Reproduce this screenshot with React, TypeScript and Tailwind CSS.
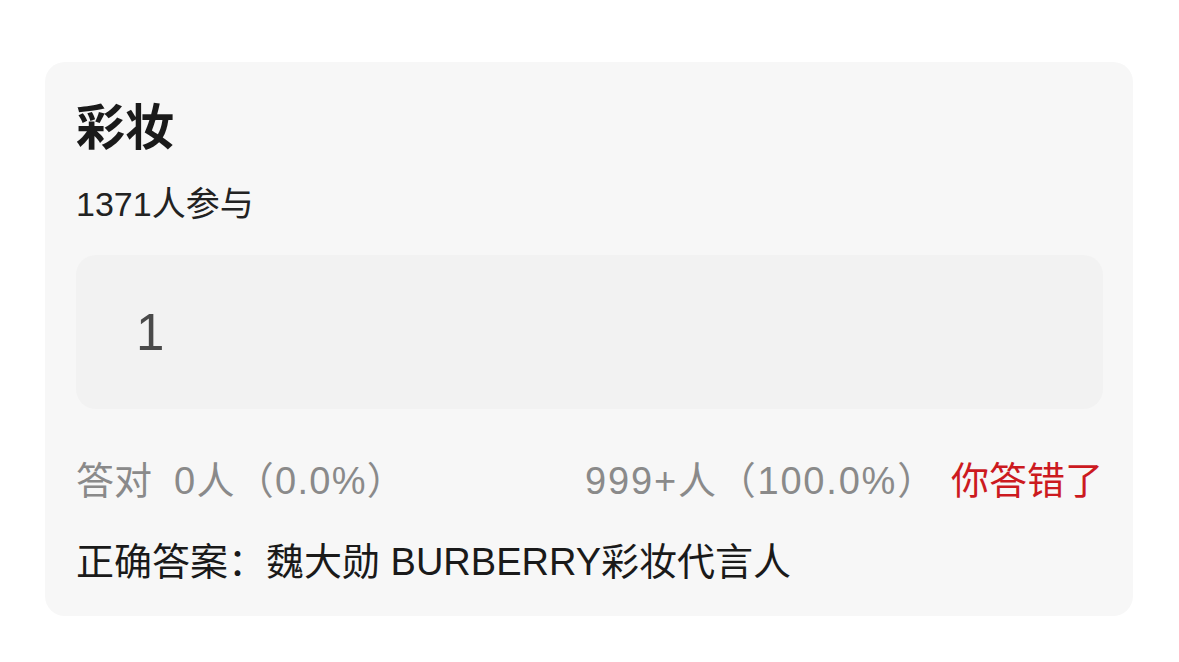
import React from "react";

const font = { fontFamily: '"Liberation Sans", "Noto Sans CJK SC", sans-serif' };

export default function App() {
  return (
    <div className="min-h-[662px] w-[1179px] bg-white pt-[62px]" style={font}>
      <div className="ml-[45px] w-[1088px] rounded-[20px] bg-[#f7f7f7] pl-[31px] pr-[30px] pt-[38px] pb-[32px]">
        <div className="text-[49px] leading-[56px] font-bold text-[#1a1a1a]">彩妆</div>
        <div className="mt-[28px] text-[34px] leading-[40px] text-[#222222]">1371人参与</div>
        <div className="mt-[31px] flex h-[154px] items-center rounded-[20px] bg-[#f2f2f2] pl-[60px]">
          <span className="text-[51px] leading-none text-[#4a4a4a]">1</span>
        </div>
        <div className="mt-[50px] flex items-center justify-between text-[38px] leading-[44px] text-[#8a8a8a]">
          <div className="flex items-center">
            <span>答对</span>
            <span className="ml-[22px] tracking-[1.3px]">0人（0.0%）</span>
          </div>
          <div className="flex items-center">
            <span className="tracking-[1.8px]">999+人（100.0%）</span>
            <span className="ml-[14px] text-[#cc1a1f]">你答错了</span>
          </div>
        </div>
        <div className="mt-[37px] text-[38px] leading-[44px] text-[#1a1a1a]">正确答案：魏大勋 BURBERRY彩妆代言人</div>
      </div>
    </div>
  );
}
